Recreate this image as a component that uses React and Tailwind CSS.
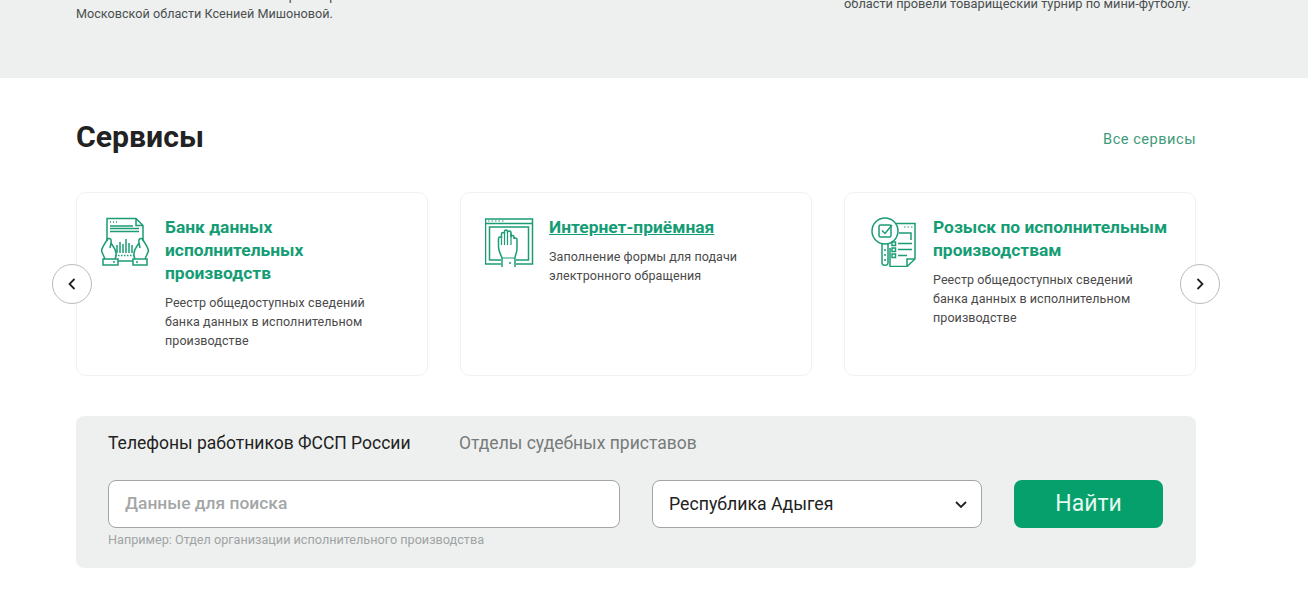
import React from "react";

const FONT = { fontFamily: "Roboto, 'Noto Sans', sans-serif" };

const BankIcon = () => (
  <svg width="50" height="50" viewBox="1 0 50 50" fill="none" stroke="#1c9c76" strokeWidth="1.5" className="shrink-0">
    <path d="M7 24V1.500H36L43 8.500V24M36 1.500V8.500H43" />
    <path d="M10 5H11M13 5H14M16 5H17" />
    <path d="M10 9H33M10 11.500H39M10 14.500H39" />
    <path d="M17 28V36M20 25V36M23 27V36M26 22V36M29 26V36M32 28V36" />
    <path d="M15 38.500H35" strokeDasharray="1.500 1.500" />
    <path d="M18 44H33" />
    <path d="M5 42L1.500 34C1.500 31 5 26 8 21.500C11 21 11.500 23 11 26L10 31M15 42C17 38 16 33 13 29L11 26" />
    <path d="M45 42L48.500 34C48.500 31 45 26 42 21.500C39 21 38.500 23 39 26L40 31M35 42C33 38 34 33 37 29L39 26" />
    <rect x="3" y="42" width="15" height="6" />
    <rect x="33" y="42" width="14" height="6" />
    <path d="M13 45H15M36 45H38" />
  </svg>
);

const HandIcon = () => (
  <svg width="50" height="50" viewBox="1 0 50 50" fill="none" stroke="#1c9c76" strokeWidth="1.500" className="shrink-0">
    <path d="M17 47H1.500V2H48.500V47H32" />
    <path d="M1.500 6.500H48.500" />
    <path d="M4 4H5.500M7.500 4H9M11 4H12.500M14.500 4H16M18 4H19.500" strokeWidth="1.200" />
    <path d="M17 43H5.500V10H44.500V43H32" />
    <path d="M18 50V41C17 38 14.500 34 14.500 30V21.500C14.500 19.500 17.500 19.500 17.500 21.500V17C17.500 15 20.500 15 20.500 17V14.500C20.500 12.500 23.500 12.500 23.500 14.500L23.500 15.500C23.500 13.500 27 13.500 27 15.500V20C27 18 30 18 30 20V22C30 20.500 33 20.500 33 22.500V32C33 36 31 38 31 41V50" />
    <path d="M18 41H31M17.500 21.500V28M20.500 17V28M23.500 15V28M27 16V28" strokeWidth="1.200" />
    <path d="M26 45V47" />
  </svg>
);

const SearchDocIcon = () => (
  <svg width="46" height="50" viewBox="0 -1 46 50" fill="none" stroke="#1c9c76" strokeWidth="1.500" className="ml-[2px] shrink-0">
    <path d="M25 5.500H44V41L36 48.500H19V30" />
    <path d="M36 48.500V41H44" />
    <circle cx="14" cy="13" r="13" />
    <rect x="8" y="7" width="12" height="12" rx="1.500" />
    <path d="M11 12.500L14 15.500L21 7" />
    <path d="M11 26V45C11 48 17 48 17 45V26" />
    <path d="M14 31V33M14 36V38M14 41V43" />
    <path d="M33 9H34.500M36.500 9H38M40 9H41.500" strokeWidth="1.200" />
    <path d="M28 15H40V22" />
    <rect x="21" y="24" width="3.500" height="3.500" />
    <rect x="21" y="30" width="3.500" height="3.500" />
    <rect x="21" y="36" width="3.500" height="3.500" />
    <path d="M27 25.500H41M27 31.500H41M27 37.500H36" />
  </svg>
);

const services = [
  {
    title: "Банк данных исполнительных производств",
    text: "Реестр общедоступных сведений банка данных в исполнительном производстве",
    icon: <BankIcon />,
    titleWidth: "w-[170px]",
  },
  {
    title: "Интернет-приёмная",
    text: "Заполнение формы для подачи электронного обращения",
    icon: <HandIcon />,
    underline: true,
    titleWidth: "w-[220px]",
  },
  {
    title: "Розыск по исполнительным производствам",
    text: "Реестр общедоступных сведений банка данных в исполнительном производстве",
    icon: <SearchDocIcon />,
    titleWidth: "w-[240px]",
  },
];

const ServiceCard = ({ item }) => (
  <div className="h-[184px] w-[352px] rounded-[10px] border border-[#f0f1f0] bg-white pl-6 pr-4 pt-6">
    <div className="flex gap-[14px]">
      <div className="w-[50px] shrink-0">{item.icon}</div>
      <div>
        <a
          href="#"
          className={`-mt-[1px] block ${item.titleWidth} text-[17.400px] font-bold leading-[23px] text-[#149d74] ${
            item.underline ? "underline" : ""
          }`}
        >
          {item.title}
        </a>
        <p className="mt-[8px] w-[225px] text-[12.500px] leading-[19px] tracking-[0.08px] text-[#4a4a4a]">
          {item.text}
        </p>
      </div>
    </div>
  </div>
);

const ArrowButton = ({ dir, className }) => (
  <button className={`absolute top-[72px] flex h-10 w-10 items-center justify-center rounded-full border border-[#b9bcbb] bg-white ${className}`}>
    <svg width="10" height="14" viewBox="0 0 10 14" fill="none" stroke="#222" strokeWidth="1.800">
      {dir === "left" ? <path d="M7.500 2L2.500 7L7.500 12" /> : <path d="M2.500 2L7.500 7L2.500 12" />}
    </svg>
  </button>
);

export default function App() {
  return (
    <div className="h-[602px] overflow-hidden bg-white" style={FONT}>
      <div className="flex h-[78px] overflow-hidden bg-[#eef0ef] pl-[76px] leading-[18px] text-[#4a4f4f]">
        <p className="-mt-[13px] w-[768px] shrink-0 whitespace-nowrap text-[12.650px]">
          совместно с Уполномоченным по правам ребенка в
          <br />
          Московской области Ксенией Мишоновой.
        </p>
        <p className="-mt-[5px] whitespace-nowrap text-[12.800px]">области провели товарищеский турнир по мини-футболу.</p>
      </div>

      <div className="ml-[76px] w-[1120px]">
        <div className="flex h-[114px] items-start justify-between pt-[40px]">
          <h2 className="text-[30.200px] font-bold leading-[38px] text-[#222]">Сервисы</h2>
          <a href="#" className="mt-[11px] text-[14.600px] leading-[20px] tracking-[0.5px] text-[#3f9a78]">
            Все сервисы
          </a>
        </div>

        <div className="relative flex gap-8">
          {services.map((item) => (
            <ServiceCard key={item.title} item={item} />
          ))}
          <ArrowButton dir="left" className="-left-6" />
          <ArrowButton dir="right" className="-right-6" />
        </div>

        <div className="mt-10 h-[152px] rounded-lg bg-[#eef0ef] px-8 pt-[15px]">
          <div className="flex gap-[48.500px] text-[17.500px] leading-[24px]">
            <span className="text-[#222]">Телефоны работников ФССП России</span>
            <span className="text-[#777b7a]">Отделы судебных приставов</span>
          </div>
          <div className="mt-[25px] flex gap-8">
            <div className="w-[512px]">
              <div className="flex h-12 items-center rounded-lg border border-[#a3a5a5] bg-white pb-[1px] pl-4 text-[17.400px] font-medium text-[#a3a6a6]">
                Данные для поиска
              </div>
              <p className="mt-[4px] text-[12.650px] leading-[16px] text-[#a0a3a3]">
                Например: Отдел организации исполнительного производства
              </p>
            </div>
            <div className="flex h-12 w-[330px] items-center justify-between rounded-lg border border-[#a3a5a5] bg-white pl-4 pr-[13px] text-[17.700px] text-[#222]">
              Республика Адыгея
              <svg width="14" height="9" viewBox="0 0 14 9" fill="none" stroke="#222" strokeWidth="1.800">
                <path d="M2 2L7 7L12 2" />
              </svg>
            </div>
            <button className="h-12 w-[149px] rounded-lg bg-[#05a06c] text-[23px] text-[#e4f8ef]">Найти</button>
          </div>
        </div>
      </div>
    </div>
  );
}
